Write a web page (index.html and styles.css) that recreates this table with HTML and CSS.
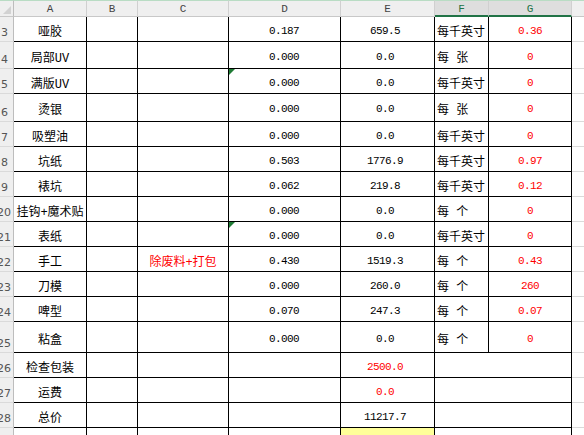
FILE: index.html
```html
<!DOCTYPE html>
<html lang="zh">
<head>
<meta charset="utf-8">
<title>Sheet</title>
<link rel="stylesheet" href="styles.css">
</head>
<body>
<div class="sheet">
  <div class="h corner"><span class="sel"></span></div>
  <div class="h">A</div><div class="h">B</div><div class="h">C</div><div class="h">D</div><div class="h">E</div><div class="h hs">F</div><div class="h hs">G</div><div class="h hx"></div>

  <div class="r">3</div><div class="c a">哑胶</div><div class="c"></div><div class="c"></div><div class="c d n">0.187</div><div class="c e n">659.5</div><div class="c f">每千英寸</div><div class="c g n red">0.36</div><div class="x"></div>
  <div class="r">4</div><div class="c a">局部UV</div><div class="c"></div><div class="c"></div><div class="c d n">0.000</div><div class="c e n">0.0</div><div class="c f">每 张</div><div class="c g n red">0</div><div class="x"></div>
  <div class="r">5</div><div class="c a">满版UV</div><div class="c"></div><div class="c"></div><div class="c d n tri">0.000</div><div class="c e n">0.0</div><div class="c f">每千英寸</div><div class="c g n red">0</div><div class="x"></div>
  <div class="r">6</div><div class="c a">烫银</div><div class="c"></div><div class="c"></div><div class="c d n">0.000</div><div class="c e n">0.0</div><div class="c f">每 张</div><div class="c g n red">0</div><div class="x"></div>
  <div class="r">7</div><div class="c a">吸塑油</div><div class="c"></div><div class="c"></div><div class="c d n">0.000</div><div class="c e n">0.0</div><div class="c f">每千英寸</div><div class="c g n red">0</div><div class="x"></div>
  <div class="r">8</div><div class="c a">坑纸</div><div class="c"></div><div class="c"></div><div class="c d n">0.503</div><div class="c e n">1776.9</div><div class="c f">每千英寸</div><div class="c g n red">0.97</div><div class="x"></div>
  <div class="r">9</div><div class="c a">裱坑</div><div class="c"></div><div class="c"></div><div class="c d n">0.062</div><div class="c e n">219.8</div><div class="c f">每千英寸</div><div class="c g n red">0.12</div><div class="x"></div>
  <div class="r r2">20</div><div class="c a">挂钩+魔术贴</div><div class="c"></div><div class="c"></div><div class="c d n">0.000</div><div class="c e n">0.0</div><div class="c f">每 个</div><div class="c g n red">0</div><div class="x"></div>
  <div class="r r2">21</div><div class="c a">表纸</div><div class="c"></div><div class="c"></div><div class="c d n tri">0.000</div><div class="c e n">0.0</div><div class="c f">每千英寸</div><div class="c g n red">0</div><div class="x"></div>
  <div class="r r2">22</div><div class="c a">手工</div><div class="c"></div><div class="c a red">除废料+打包</div><div class="c d n">0.430</div><div class="c e n">1519.3</div><div class="c f">每 个</div><div class="c g n red">0.43</div><div class="x"></div>
  <div class="r r2">23</div><div class="c a">刀模</div><div class="c"></div><div class="c"></div><div class="c d n">0.000</div><div class="c e n">260.0</div><div class="c f">每 个</div><div class="c g n red">260</div><div class="x"></div>
  <div class="r r2">24</div><div class="c a">啤型</div><div class="c"></div><div class="c"></div><div class="c d n">0.070</div><div class="c e n">247.3</div><div class="c f">每 个</div><div class="c g n red">0.07</div><div class="x"></div>
  <div class="r r2">25</div><div class="c a">粘盒</div><div class="c"></div><div class="c"></div><div class="c d n">0.000</div><div class="c e n">0.0</div><div class="c f">每 个</div><div class="c g n red">0</div><div class="x"></div>
  <div class="r r2">26</div><div class="c a">检查包装</div><div class="c"></div><div class="c"></div><div class="c"></div><div class="c e n red">2500.0</div><div class="c fg"></div><div class="x"></div>
  <div class="r r2">27</div><div class="c a">运费</div><div class="c"></div><div class="c"></div><div class="c"></div><div class="c e n red">0.0</div><div class="c fg"></div><div class="x"></div>
  <div class="r r2">28</div><div class="c a">总价</div><div class="c"></div><div class="c"></div><div class="c"></div><div class="c e n">11217.7</div><div class="c fg"></div><div class="x"></div>
  <div class="r r2">29</div><div class="c"></div><div class="c"></div><div class="c"></div><div class="c"></div><div class="c yel"></div><div class="c fg"></div><div class="x"></div>
</div>
</body>
</html>
```
FILE: styles.css
```css
html, body {
  margin: 0;
  padding: 0;
  background: #fff;
  overflow: hidden;
}

.sheet {
  display: grid;
  grid-template-columns: 14px 73px 51px 91px 112px 94px 54px 83px 40px;
  grid-template-rows: 17px 25px 27px 25px 28px 25px 25px 25px 25px 25px 25px 25px 25px 31px 25px 25px 25px 25px;
  width: 584px;
  height: 435px;
  overflow: hidden;
  font-family: "Liberation Mono", "Noto Sans CJK SC", monospace;
  font-size: 12px;
  color: #000;
}

/* column headers */
.h {
  box-sizing: border-box;
  background: #efefef;
  border-top: 1px solid #b9dcc4;
  border-bottom: 1px solid #c8c8c8;
  border-right: 1px solid #d0d0d0;
  color: #444;
  font-family: "Liberation Mono", monospace;
  font-size: 11px;
  display: flex;
  align-items: center;
  justify-content: center;
  padding-top: 1px;
}

.hs {
  background: #dedede;
  color: #217346;
  border-bottom: 2px solid #217346;
}

.hx {
  border-right: none;
}

.corner {
  justify-content: flex-end;
  align-items: flex-end;
  padding: 0 2px 2px 0;
  border-right: 1px solid #bdbdbd;
}

.sel {
  width: 0;
  height: 0;
  border-left: 8px solid transparent;
  border-bottom: 8px solid #d2d2d2;
}

/* row headers */
.r {
  box-sizing: border-box;
  background: #efefef;
  border-right: 1px solid #bdbdbd;
  border-bottom: 1px solid #dadada;
  color: #555;
  font-family: "DejaVu Sans", sans-serif;
  font-size: 11px;
  display: flex;
  align-items: flex-end;
  justify-content: flex-start;
  padding: 0 0 2px 1px;
  overflow: hidden;
  white-space: nowrap;
}

.r2 {
  text-indent: -4px;
}

/* data cells */
.c {
  box-sizing: border-box;
  border-right: 1px solid #000;
  border-bottom: 1px solid #000;
  display: flex;
  align-items: center;
  justify-content: center;
  padding-top: 3px;
  white-space: nowrap;
  position: relative;
}

.x {
  border-bottom: 1px solid #dadada;
}

.n {
  font-size: 11px;
  letter-spacing: -0.6px;
}

.d {
  justify-content: flex-end;
  padding-right: 41px;
}

.e {
  padding-right: 5px;
}

.f {
  justify-content: flex-start;
  padding-left: 2px;
}

.fg {
  grid-column: span 2;
}

.red {
  color: #ff0000;
}

.yel {
  background: #ffff99;
}

.tri::before {
  content: "";
  position: absolute;
  left: 0;
  top: 0;
  width: 0;
  height: 0;
  border-top: 6px solid #1f7b34;
  border-right: 6px solid transparent;
}
```
